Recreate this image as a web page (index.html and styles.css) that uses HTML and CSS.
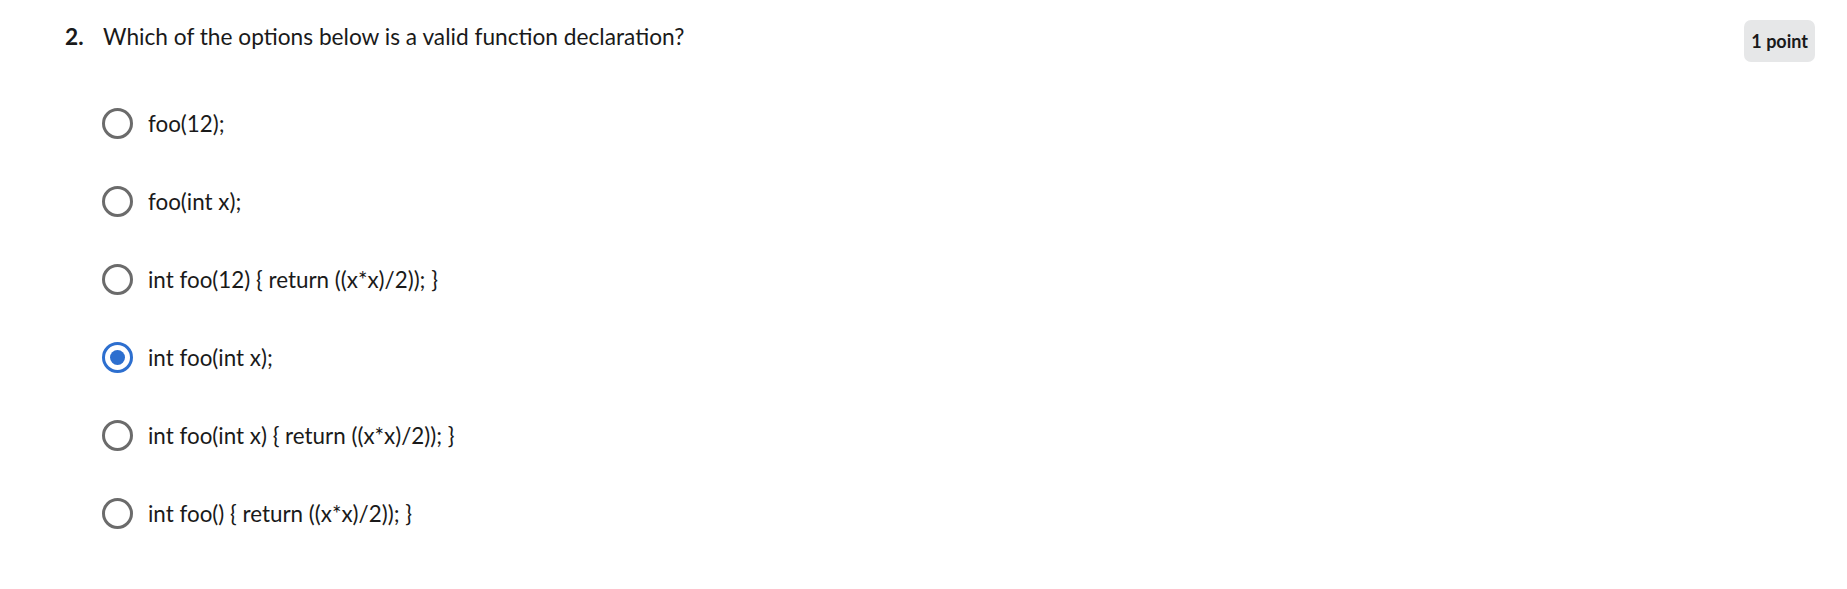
FILE: index.html
```html
<!DOCTYPE html>
<html lang="en">
<head>
<meta charset="utf-8">
<title>Question 2</title>
<link rel="stylesheet" href="styles.css">
</head>
<body>
<div class="question">
  <div class="q-head">
    <span class="q-num">2.</span>
    <div class="q-text">Which of the options below is a valid function declaration?</div>
    <span class="badge">1 point</span>
  </div>
  <div class="options">
    <label class="opt"><span class="radio"></span><span class="opt-text">foo(12);</span></label>
    <label class="opt"><span class="radio"></span><span class="opt-text">foo(int x);</span></label>
    <label class="opt"><span class="radio"></span><span class="opt-text">int foo(12) { return ((x*x)/2)); }</span></label>
    <label class="opt"><span class="radio checked"></span><span class="opt-text">int foo(int x);</span></label>
    <label class="opt"><span class="radio"></span><span class="opt-text">int foo(int x) { return ((x*x)/2)); }</span></label>
    <label class="opt"><span class="radio"></span><span class="opt-text">int foo() { return ((x*x)/2)); }</span></label>
  </div>
</div>
</body>
</html>
```
FILE: styles.css
```css
html, body {
  margin: 0;
  padding: 0;
  background: #ffffff;
}
body {
  font-family: Lato, "Open Sans", sans-serif;
  color: #1a1a1a;
}
.question {
  padding: 20px 32px 0 65px;
}
.q-head {
  display: flex;
  align-items: flex-start;
}
.q-num {
  font-weight: 700;
  font-size: 22.7px;
  width: 38px;
  line-height: 28px;
  padding-top: 3px;
}
.q-text {
  flex: 1;
  font-size: 22.7px;
  line-height: 28px;
  padding-top: 3px;
}
.badge {
  background: #e6e7e8;
  border-radius: 7px;
  font-weight: 700;
  font-size: 18px;
  line-height: 42px;
  height: 42px;
  padding: 0 7px;
  color: #1a1a1a;
}
.options {
  display: flex;
  flex-direction: column;
  padding-left: 37px;
  padding-top: 22px;
}
.opt {
  display: flex;
  align-items: center;
  height: 78px;
  gap: 15px;
  font-size: 22.4px;
}
.radio {
  box-sizing: border-box;
  width: 31px;
  height: 31px;
  border: 3px solid #6b6b6b;
  border-radius: 50%;
  display: flex;
  align-items: center;
  justify-content: center;
  flex: none;
}
.radio.checked {
  border-color: #2d6fcf;
}
.radio.checked::after {
  content: "";
  width: 15px;
  height: 15px;
  border-radius: 50%;
  background: #2d6fcf;
}
```
